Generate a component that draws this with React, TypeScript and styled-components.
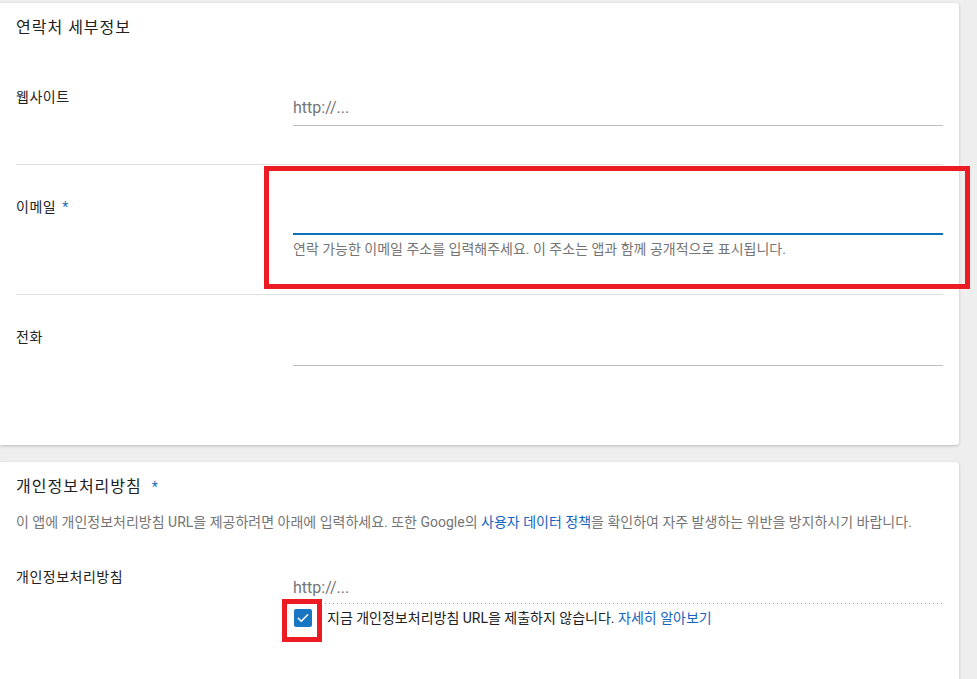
import React from "react";
import styled, { createGlobalStyle } from "styled-components";

const GlobalStyle = createGlobalStyle`
  html, body {
    margin: 0;
    padding: 0;
    background: #eeeeee;
    font-family: Roboto, "Noto Sans CJK KR", sans-serif;
    color: #212121;
  }
  * { box-sizing: border-box; }
`;

const Page = styled.div`
  padding: 3px 18px 0 0;
  display: flex;
  flex-direction: column;
  gap: 17px;
  height: 679px;
  overflow: hidden;
`;

const Card = styled.section<{ $bottom: number }>`
  background: #fff;
  border-radius: 0 3px 3px 0;
  box-shadow: 0 1px 3px rgba(0, 0, 0, 0.22);
  padding: 13px 16px ${(p) => p.$bottom}px;
  flex-shrink: 0;
`;

const CardTitle = styled.h2<{ $gap: number }>`
  margin: 0 0 ${(p) => p.$gap}px;
  font-size: 16px;
  line-height: 24px;
  font-weight: 400;
  letter-spacing: 1px;
  color: #212121;
`;

const Required = styled.span<{ $gap: number }>`
  color: #1a73b8;
  margin-left: ${(p) => p.$gap}px;
  font-size: 14px;
  letter-spacing: 0;
`;

const Row = styled.div<{ $divider?: boolean; $bottom: number }>`
  position: relative;
  display: grid;
  grid-template-columns: 277px 1fr;
  padding: 32px 0 ${(p) => p.$bottom}px;
  border-top: ${(p) => (p.$divider ? "1px solid #e0e0e0" : "none")};
`;

const Label = styled.div`
  font-size: 14px;
  line-height: 20px;
  letter-spacing: 0.5px;
  color: #212121;
`;

const FieldCol = styled.div`
  padding-top: 8px;
  display: flex;
  flex-direction: column;
`;

const TextInput = styled.input<{ $focused?: boolean }>`
  border: none;
  outline: none;
  font-family: Roboto, "Noto Sans CJK KR", sans-serif;
  font-size: 16px;
  line-height: 24px;
  height: ${(p) => (p.$focused ? 30 : 31)}px;
  padding: 0 0 ${(p) => (p.$focused ? 4 : 6)}px;
  border-bottom: ${(p) => (p.$focused ? "2px solid #0b72b9" : "1px solid #bdbdbd")};
  color: #212121;
  background: transparent;
  &::placeholder { color: #757575; }
`;

const DottedInput = styled.input`
  border: none;
  outline: none;
  font-family: Roboto, "Noto Sans CJK KR", sans-serif;
  font-size: 16px;
  line-height: 24px;
  height: 29px;
  padding: 0 0 5px;
  background-color: transparent;
  background-image: linear-gradient(to right, #9e9e9e 1px, transparent 1px);
  background-size: 4px 1px;
  background-repeat: repeat-x;
  background-position: left bottom;
  &::placeholder { color: #757575; }
`;

const Helper = styled.div`
  margin-top: 5px;
  font-size: 14px;
  line-height: 18px;
  color: #757575;
`;

const Description = styled.p`
  margin: 0;
  font-size: 14px;
  line-height: 18px;
  color: #757575;
`;

const Link = styled.a`
  color: #1565c0;
  text-decoration: none;
`;

const PolicyRow = styled.div`
  display: grid;
  grid-template-columns: 277px 1fr;
  margin-top: 36px;
`;

const CheckRow = styled.label`
  display: flex;
  align-items: center;
  gap: 15px;
  margin-top: 5px;
  margin-left: 1px;
  font-size: 14px;
  line-height: 18px;
  color: #212121;
`;

const CheckWrap = styled.span`
  position: relative;
  display: inline-flex;
`;

const CheckBox = styled.span`
  width: 18px;
  height: 18px;
  border-radius: 2px;
  background: #1976c2;
  display: inline-flex;
  align-items: center;
  justify-content: center;
`;

const Highlight = styled.div<{ $l: number; $t: number; $w: number; $h: number }>`
  position: absolute;
  left: ${(p) => p.$l}px;
  top: ${(p) => p.$t}px;
  width: ${(p) => p.$w}px;
  height: ${(p) => p.$h}px;
  border: 5px solid #ed1c24;
  pointer-events: none;
`;

export default function App() {
  return (
    <>
      <GlobalStyle />
      <Page>
        <Card $bottom={79}>
          <CardTitle $gap={15}>연락처 세부정보</CardTitle>
          <Row $bottom={38}>
            <Label>웹사이트</Label>
            <FieldCol>
              <TextInput placeholder="http://..." />
            </FieldCol>
          </Row>
          <Row $divider $bottom={36}>
            <Label>
              이메일<Required $gap={6}>*</Required>
            </Label>
            <FieldCol>
              <TextInput $focused />
              <Helper>연락 가능한 이메일 주소를 입력해주세요. 이 주소는 앱과 함께 공개적으로 표시됩니다.</Helper>
            </FieldCol>
            <Highlight $l={248} $t={1} $w={706} $h={123} />
          </Row>
          <Row $divider $bottom={0}>
            <Label>전화</Label>
            <FieldCol>
              <TextInput />
            </FieldCol>
          </Row>
        </Card>
        <Card $bottom={80}>
          <CardTitle $gap={14}>
            개인정보처리방침<Required $gap={10}>*</Required>
          </CardTitle>
          <Description>
            이 앱에 개인정보처리방침 URL을 제공하려면 아래에 입력하세요. 또한 Google의{" "}
            <Link href="#">사용자 데이터 정책</Link>을 확인하여 자주 발생하는 위반을 방지하시기 바랍니다.
          </Description>
          <PolicyRow>
            <Label>개인정보처리방침</Label>
            <FieldCol>
              <DottedInput placeholder="http://..." disabled />
              <CheckRow>
                <CheckWrap>
                  <CheckBox>
                    <svg width="14" height="14" viewBox="0 0 24 24" fill="none">
                      <path d="M4 12.5l5 5L20 6.5" stroke="#fff" strokeWidth="2.6" strokeLinecap="round" strokeLinejoin="round" />
                    </svg>
                  </CheckBox>
                  <Highlight $l={-12} $t={-10} $w={40} $h={43} />
                </CheckWrap>
                <span>
                  지금 개인정보처리방침 URL을 제출하지 않습니다. <Link href="#">자세히 알아보기</Link>
                </span>
              </CheckRow>
            </FieldCol>
          </PolicyRow>
        </Card>
      </Page>
    </>
  );
}
